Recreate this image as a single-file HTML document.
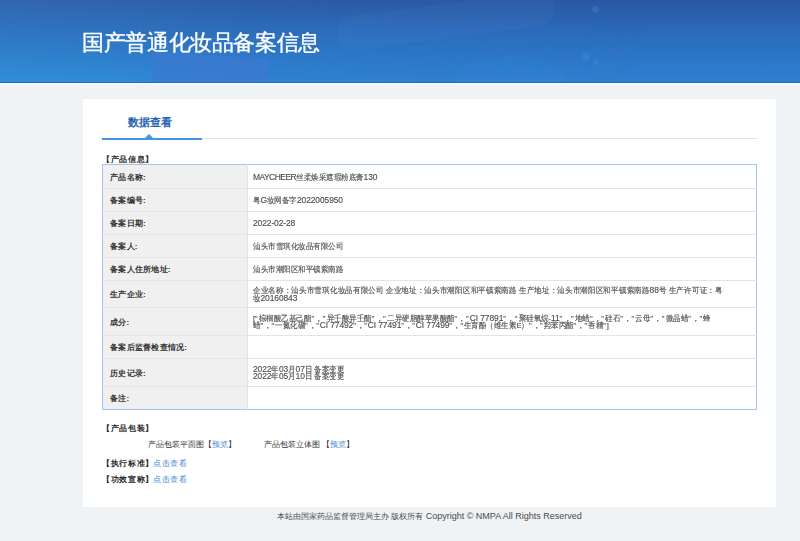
<!DOCTYPE html>
<html>
<head>
<meta charset="utf-8">
<style>
html,body{margin:0;padding:0;}
body{width:800px;height:541px;overflow:hidden;background:#f0f3f6;font-family:"Liberation Sans",sans-serif;position:relative;}
.hdr{position:absolute;left:0;top:0;width:800px;height:83px;background:linear-gradient(to bottom,#2a58a1 0%,#2c6fbf 48%,#2e7fd0 100%);overflow:hidden;}
.hdr .lft{position:absolute;left:0;top:0;width:800px;height:83px;background:linear-gradient(to bottom,#3266ae 0%,#2f7ac6 50%,#3090d8 100%);-webkit-mask-image:linear-gradient(100deg,#000 0%,rgba(0,0,0,.75) 15%,rgba(0,0,0,.3) 32%,rgba(0,0,0,.1) 55%,rgba(0,0,0,0) 80%);}
.hdr .trap{position:absolute;left:152px;top:52px;width:118px;height:31px;background:#3b79d1;opacity:.75;clip-path:polygon(0 0,100% 20%,96% 100%,0 100%);}
.hdr .ell{position:absolute;left:336px;top:4px;width:220px;height:34px;border-radius:17px;background:rgba(120,170,240,.06);transform:rotate(-7deg);}
.hdr .ell2{position:absolute;left:455px;top:56px;width:110px;height:40px;border-radius:50%;background:rgba(60,150,230,.10);}
.hdr .dot{position:absolute;border-radius:50%;background:rgba(70,140,230,.35);}
.hdr .line{position:absolute;left:0;top:81.5px;width:800px;height:1.5px;background:#1a72cc;}
.wl{position:absolute;left:0;top:83px;width:800px;height:2px;background:#fbfbfb;}
.title{position:absolute;left:82px;top:28.5px;font-size:22px;line-height:28px;color:#fff;-webkit-text-stroke:0.35px #fff;white-space:nowrap;transform:scale(0.983);transform-origin:0 0;}
.box{position:absolute;left:83px;top:99px;width:693px;height:408px;background:#fff;}
.abs{position:absolute;white-space:nowrap;}
.tab{left:128px;top:115px;font-size:11px;line-height:14px;font-weight:bold;color:#2863b2;}
.tabline{left:102px;top:138px;width:100px;height:2px;background:#4394e2;}
.grayline{left:202px;top:138px;width:555px;height:1px;background:#e3e3e3;}
.tri{left:145px;top:134px;width:0;height:0;border-left:4px solid transparent;border-right:4px solid transparent;border-bottom:4px solid #4394e2;}
.sec{font-size:8px;line-height:10px;font-weight:bold;color:#2a2a2a;letter-spacing:0.7px;}
table{position:absolute;left:102px;top:164px;width:655px;border-collapse:collapse;border:1px solid #a8c3eb;}
td{padding:0;font-size:8px;line-height:8px;border-top:1px solid #e4e4e4;vertical-align:middle;}
tr:first-child td{border-top:none;}
td.l{width:145px;background:#f0f0f0;font-weight:bold;color:#333;letter-spacing:0.25px;padding-left:7px;padding-top:2px;box-sizing:border-box;border-right:1px solid #e4e4e4;}
td.v{color:#444;padding-left:5px;padding-top:2px;white-space:nowrap;}
.s{display:inline-block;line-height:7.5px;transform:scale(0.9375,1);transform-origin:0 50%;-webkit-text-stroke:0.15px #666;}
.q{letter-spacing:1.3px;}
.n{font-size:9px;letter-spacing:-0.1px;line-height:1px;}
.q2{letter-spacing:0.93px;}
.pk{font-size:8px;line-height:10px;color:#333;}
.lnk{color:#4283d3;}
.foot{left:83px;width:693px;text-align:center;top:511px;font-size:8px;line-height:10px;color:#4a4a4a;}
</style>
</head>
<body>
<div class="hdr"><div class="lft"></div><div class="trap"></div><div class="ell"></div><div class="ell2"></div><div class="dot" style="left:592px;top:6px;width:7px;height:7px"></div><div class="dot" style="left:581px;top:52px;width:9px;height:9px"></div><div class="dot" style="left:593px;top:59px;width:6px;height:6px"></div><div class="line"></div></div>
<div class="wl"></div>
<div class="title">国产普通化妆品备案信息</div>
<div class="box"></div>
<div class="abs tab">数据查看</div>
<div class="abs tabline"></div>
<div class="abs grayline"></div>
<div class="abs tri"></div>
<div class="abs sec" style="left:102px;top:154.5px;">【产品信息】</div>
<table>
<tr style="height:24px"><td class="l">产品名称:</td><td class="v"><span class="s"><span class="n" style="letter-spacing:-0.55px">MAYCHEER</span>丝柔焕采遮瑕粉底膏<span class="n">130</span></span></td></tr>
<tr style="height:23px"><td class="l">备案编号:</td><td class="v"><span class="s">粤<span class="n">G</span>妆网备字<span class="n">2022005950</span></span></td></tr>
<tr style="height:23px"><td class="l">备案日期:</td><td class="v"><span class="s"><span class="n">2022-02-28</span></span></td></tr>
<tr style="height:23px"><td class="l">备案人:</td><td class="v"><span class="s">汕头市雪琪化妆品有限公司</span></td></tr>
<tr style="height:23px"><td class="l">备案人住所地址:</td><td class="v"><span class="s">汕头市潮阳区和平镇紫南路</span></td></tr>
<tr style="height:27px"><td class="l">生产企业:</td><td class="v"><span class="s"><span style="letter-spacing:0.2px">企业名称：汕头市雪琪化妆品有限公司 企业地址：汕头市潮阳区和平镇紫南路 生产地址：汕头市潮阳区和平镇紫南路<span class="n" style="letter-spacing:-0.1px">88</span>号 生产许可证：粤</span><br>妆<span class="n">20160843</span></span></td></tr>
<tr style="height:28px"><td class="l">成分:</td><td class="v"><span class="s">[<span class="q">"</span>棕榈酸乙基己酯<span class="q">"</span>，<span class="q">"</span>异壬酸异壬酯<span class="q">"</span>，<span class="q">"</span>二异硬脂醇苹果酸酯<span class="q">"</span>，<span class="q">"</span><span class="n">CI 77891</span><span class="q">"</span>，<span class="q">"</span>聚硅氧烷-<span class="n">11</span><span class="q">"</span>，<span class="q">"</span>地蜡<span class="q">"</span>，<span class="q">"</span>硅石<span class="q">"</span>，<span class="q">"</span>云母<span class="q">"</span>，<span class="q">"</span>微晶蜡<span class="q">"</span>，<span class="q">"</span>蜂<br>蜡<span class="q2">"</span>，<span class="q2">"</span>一氮化硼<span class="q2">"</span>，<span class="q2">"</span><span class="n">CI 77492</span><span class="q2">"</span>，<span class="q2">"</span><span class="n">CI 77491</span><span class="q2">"</span>，<span class="q2">"</span><span class="n">CI 77499</span><span class="q2">"</span>，<span class="q2">"</span>生育酚（维生素E）<span class="q2">"</span>，<span class="q2">"</span>羟苯丙酯<span class="q2">"</span>，<span class="q2">"</span>香精<span class="q2">"</span>]</span></td></tr>
<tr style="height:23px"><td class="l">备案后监督检查情况:</td><td class="v"></td></tr>
<tr style="height:28px"><td class="l">历史记录:</td><td class="v"><span class="s"><span class="n">2022</span>年<span class="n">03</span>月<span class="n">07</span>日 备案变更<br><span class="n">2022</span>年<span class="n">05</span>月<span class="n">10</span>日 备案变更</span></td></tr>
<tr style="height:23px"><td class="l">备注:</td><td class="v"></td></tr>
</table>
<div class="abs sec" style="left:102px;top:424px;">【产品包装】</div>
<div class="abs pk" style="left:148px;top:440px;">产品包装平面图【<span class="lnk">预览</span>】</div>
<div class="abs pk" style="left:264px;top:440px;">产品包装立体图 【<span class="lnk">预览</span>】</div>
<div class="abs sec" style="left:102px;top:459px;">【执行标准】</div><div class="abs pk lnk" style="left:153px;top:459px;letter-spacing:0.5px">点击查看</div>
<div class="abs sec" style="left:102px;top:475px;">【功效宣称】</div><div class="abs pk lnk" style="left:153px;top:475px;letter-spacing:0.5px">点击查看</div>
<div class="abs foot">本站由国家药品监督管理局主办 版权所有 <span style="font-size:9px">Copyright © NMPA All Rights Reserved</span></div>
</body>
</html>
